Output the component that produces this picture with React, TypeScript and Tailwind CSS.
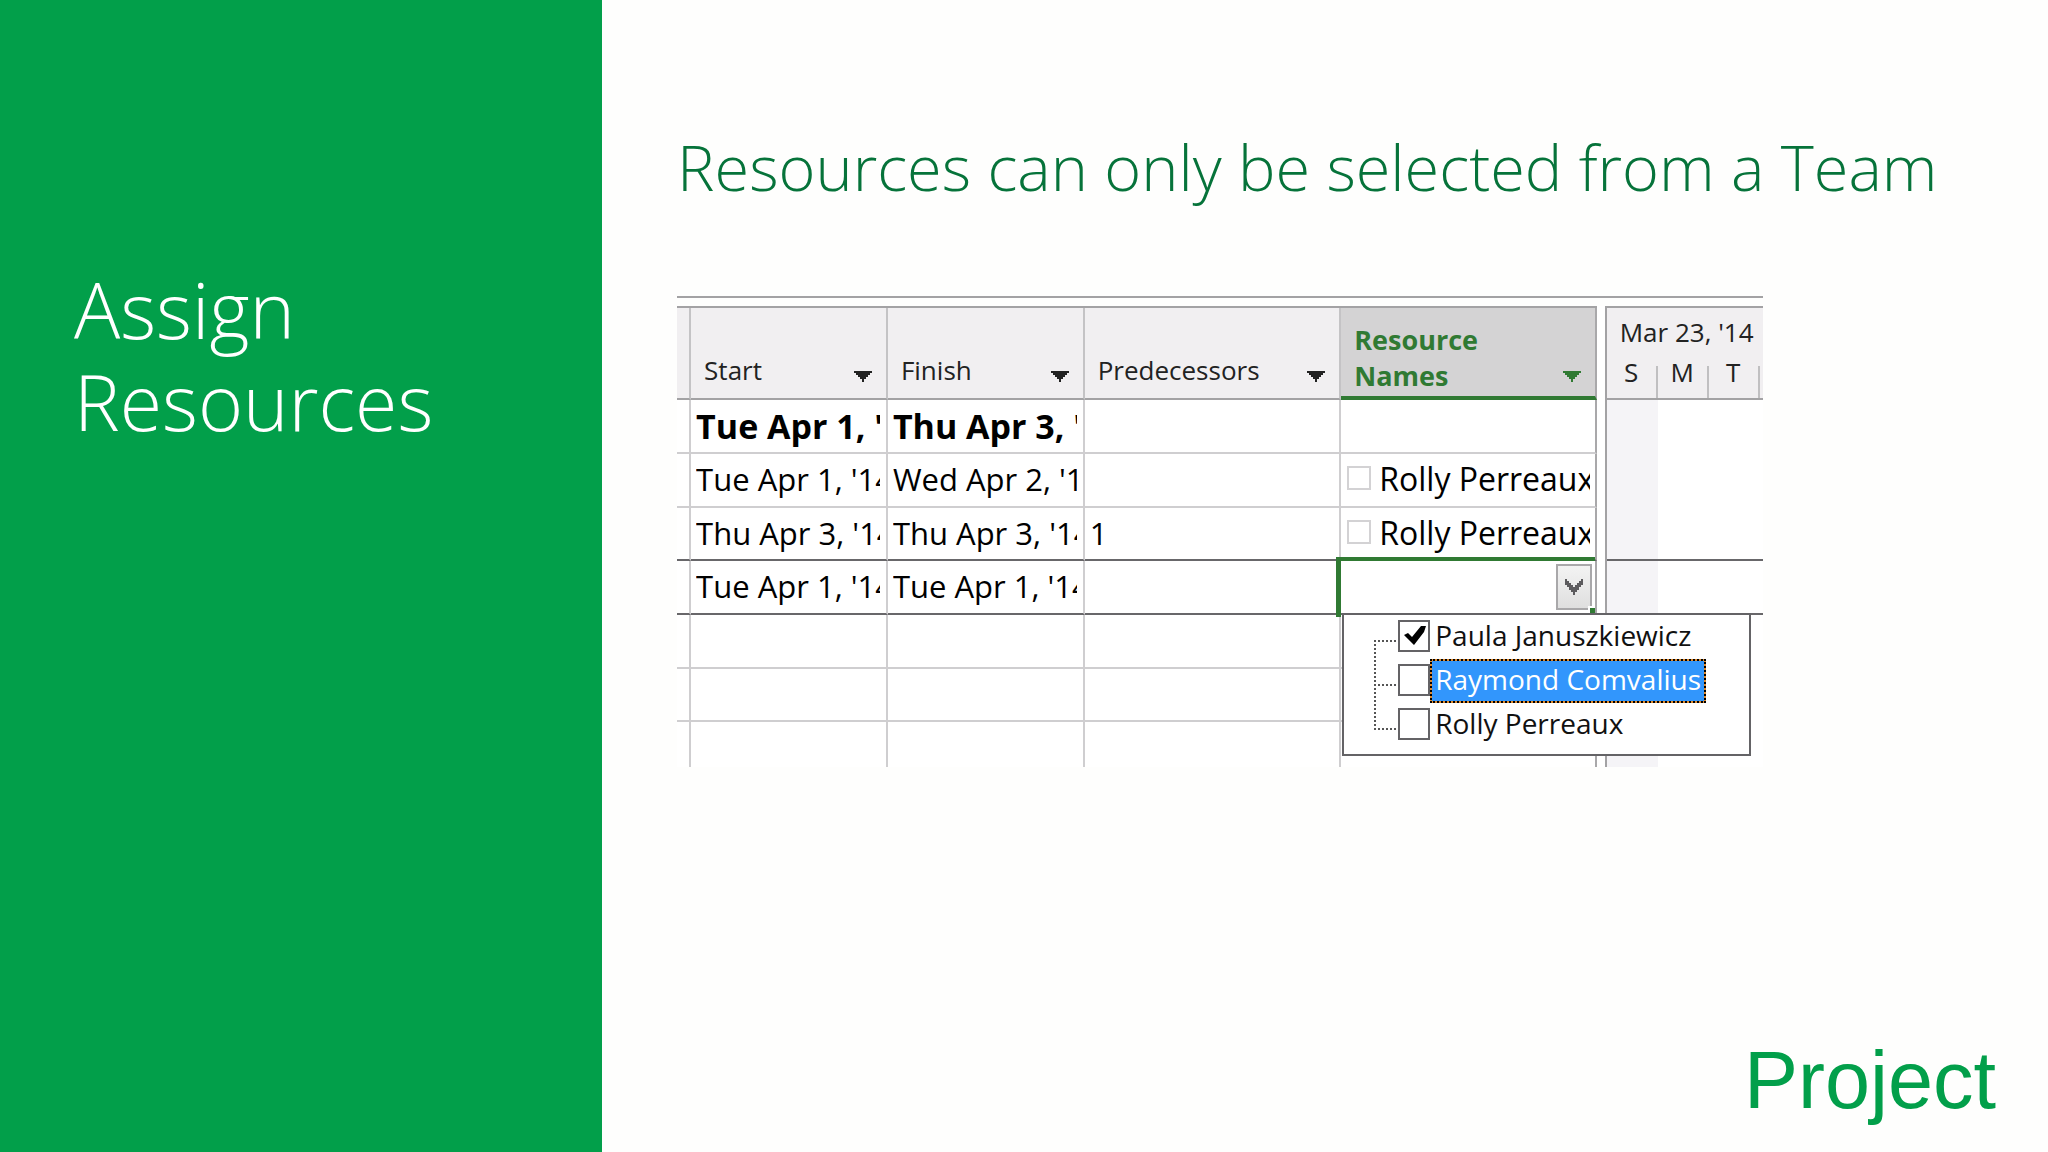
import React from "react";

type Row = { start?: string; finish?: string; pred?: string; name?: string; bold?: boolean; active?: boolean; height: string };

const rows: Row[] = [
  { start: "Tue Apr 1, '14", finish: "Thu Apr 3, '14", bold: true, height: "h-[54px]" },
  { start: "Tue Apr 1, '14", finish: "Wed Apr 2, '14", name: "Rolly Perreaux", height: "h-[54px]" },
  { start: "Thu Apr 3, '14", finish: "Thu Apr 3, '14", pred: "1", name: "Rolly Perreaux", height: "h-[53px]" },
  { start: "Tue Apr 1, '14", finish: "Tue Apr 1, '14", active: true, height: "h-[54px]" },
  { height: "h-[54px]" },
  { height: "h-[53px]" },
  { height: "h-[45px]" },
];

const resources = [
  { name: "Paula Januszkiewicz", checked: true, selected: false },
  { name: "Raymond Comvalius", checked: false, selected: true },
  { name: "Rolly Perreaux", checked: false, selected: false },
];

function FilterArrow({ label, className }: { label: string; className: string }) {
  return (
    <button type="button" aria-label={`Filter ${label}`} className={className}>
      <svg width="18" height="11" viewBox="0 0 18 11" fill="currentColor" aria-hidden="true">
        <path d="M0 0H18V2H16V4H14V6H12V8H10V11H8V8H6V6H4V4H2V2H0Z" />
      </svg>
    </button>
  );
}

function HeaderCell({ label }: { label: string }) {
  return (
    <th scope="col" className="border-r-2 border-b-2 border-r-[#c4c3c5] border-b-[#a3a2a4] bg-[#f1eff1] p-0 align-bottom font-normal">
      <div className="flex items-end justify-between pr-3.5 pb-3 pl-[13px] text-[#222]">
        <span className="text-[26px] leading-8">{label}</span>
        <FilterArrow label={label} className="pb-1" />
      </div>
    </th>
  );
}

function lineClass(row: Row) {
  const i = rows.indexOf(row);
  if (i === rows.length - 1) return "";
  return i === 2 || i === 3 ? "border-b-2 border-b-[#68676a]" : "border-b-2 border-b-[#cfced0]";
}

function Cell({ text, row }: { text?: string; row: Row }) {
  return (
    <td className={`border-r-2 border-r-[#cfced0] p-0 ${lineClass(row)}`}>
      <div className={`mr-1.5 ml-[5px] overflow-hidden whitespace-nowrap ${row.bold ? "text-[34px] leading-[44px] font-bold" : "pb-0.5 text-[31px] leading-10"}`}>
        {text}
      </div>
    </td>
  );
}

function ResourceMenu() {
  return (
    <div className="absolute top-full left-px z-20 w-[409px] border-2 border-[#646366] bg-white pb-[7px]">
      <svg className="absolute top-[25px] left-[30px]" width="24" height="92" viewBox="0 0 24 92" fill="none" stroke="#555" strokeWidth="2" strokeDasharray="2 2" aria-hidden="true">
        <path d="M1 0V90M0 1H22M0 45H22M0 89H22" />
      </svg>
      <ul className="pl-[54px]">
        {resources.map((r) => (
          <li key={r.name}>
            <label className="flex h-11 items-center">
              <span className="relative mb-0.5 flex size-8 shrink-0">
                <input type="checkbox" defaultChecked={r.checked} className="peer size-8 appearance-none border-2 border-[#646366] bg-white" />
                <svg className="pointer-events-none absolute top-1.5 left-1.5 hidden peer-checked:block" width="22" height="20" viewBox="0 0 22 20" fill="#000" aria-hidden="true">
                  <path d="M0 9L4 7L8 11L17 0L22 0L20 6L10 19Z" />
                </svg>
              </span>
              {r.selected ? (
                <span className="border-2 border-dotted border-black bg-[#e08a2c]">
                  <span className="block bg-[#3296fc] px-[3px] pb-1 text-[28px] leading-9 text-white">{r.name}</span>
                </span>
              ) : (
                <span className="px-[5px] pb-1 text-[28px] leading-9 text-[#111]">{r.name}</span>
              )}
            </label>
          </li>
        ))}
      </ul>
    </div>
  );
}

function ResourceCell({ row }: { row: Row }) {
  const last = `relative border-r-2 border-r-[#a9a8aa] p-0 ${lineClass(row)}`;
  if (row.active) {
    return (
      <td className={last}>
        <span className="pointer-events-none absolute -top-1 right-0 -bottom-1 -left-[5px] border-t-4 border-l-[5px] border-[#307a33]" />
        <div className="flex justify-end pr-[3px]">
          <button type="button" aria-label="Choose resources" className="flex h-[46px] w-9 items-center justify-center border-2 border-[#a9a8aa] bg-linear-to-b from-[#f3f3f3] to-[#dfdfdf]">
            <svg width="18" height="16" viewBox="0 0 18 16" fill="#5c5b5e" aria-hidden="true">
              <path d="M0 0H2V2H4V4H6V6H8V8H10V6H12V4H14V2H16V0H18V6H16V8H14V11H12V13H10V16H8V13H6V11H4V8H2V6H0Z" />
            </svg>
          </button>
        </div>
        <span className="absolute right-0 bottom-0 size-[7px] border-t-2 border-l-2 border-white bg-[#307a33]" />
        <ResourceMenu />
      </td>
    );
  }
  return (
    <td className={last}>
      {row.name && (
        <label className="mr-[5px] ml-1.5 flex items-center gap-2 overflow-hidden pb-0.5 whitespace-nowrap text-[32px] leading-10">
          <input type="checkbox" className="mb-0.5 size-6 shrink-0 appearance-none border-2 border-[#d3d2d4] bg-white" />
          {row.name}
        </label>
      )}
    </td>
  );
}

function Sheet() {
  return (
    <table className="w-full table-fixed border-separate border-spacing-0 border-t-2 border-[#a3a2a4] text-left text-black">
      <colgroup>
        <col className="w-[14px]" />
        <col className="w-[21.4%]" />
        <col className="w-[21.4%]" />
        <col className="w-[27.9%]" />
        <col />
      </colgroup>
      <thead>
        <tr className="h-[92px]">
          <td className="border-r-2 border-b-2 border-r-[#c4c3c5] border-b-[#a3a2a4] bg-[#f1eff1] p-0" />
          <HeaderCell label="Start" />
          <HeaderCell label="Finish" />
          <HeaderCell label="Predecessors" />
          <th scope="col" className="border-r-2 border-b-4 border-r-[#a9a8aa] border-b-[#307a33] bg-[#d4d3d4] p-0 align-bottom">
            <div className="flex items-end justify-between pr-3.5 pb-0.5 pl-[13px] text-[#307a33]">
              <span className="text-[27px] leading-9 font-bold">
                Resource
                <br />
                Names
              </span>
              <FilterArrow label="Resource Names" className="pb-3" />
            </div>
          </th>
        </tr>
      </thead>
      <tbody>
        {rows.map((row, i) => (
          <tr key={i} className={row.height}>
            <td className={`border-r-2 border-r-[#cfced0] p-0 ${lineClass(row)}`} />
            <Cell text={row.start} row={row} />
            <Cell text={row.finish} row={row} />
            <Cell text={row.pred} row={row} />
            <ResourceCell row={row} />
          </tr>
        ))}
      </tbody>
    </table>
  );
}

function Timeline() {
  return (
    <div className="flex min-w-0 flex-1 flex-col overflow-hidden border-t-2 border-l-2 border-[#a3a2a4]">
      <div className="flex h-[92px] flex-col justify-between border-b-2 border-[#a3a2a4] bg-[#f1eff1] text-[26px] text-[#222]">
        <div className="pt-1.5 pl-[13px] leading-9 whitespace-nowrap">Mar 23, '14</div>
        <div className="flex">
          {["S", "M", "T"].map((d) => (
            <span key={d} className="flex w-[51px] shrink-0 items-end">
              <span className="grow pb-3.5 text-center leading-6">{d}</span>
              <span className="h-8 w-0.5 bg-[#c0bfc1]" />
            </span>
          ))}
        </div>
      </div>
      <div className="h-[161px] border-b-2 border-[#68676a]">
        <div className="h-full w-[51px] bg-[#f5f4f7]" />
      </div>
      <div className="h-[54px] border-b-2 border-[#68676a]">
        <div className="h-full w-[51px] bg-[#f5f4f7]" />
      </div>
      <div className="w-[51px] grow bg-[#f5f4f7]" />
    </div>
  );
}

export default function App() {
  return (
    <div className="flex min-h-screen bg-[#fefefd] font-['Open_Sans',sans-serif]">
      <aside className="w-[29.4%] shrink-0 bg-[#029f4a] pt-[264px] pl-[74px]">
        <h1 className="text-[77px] leading-[92px] font-light text-white">
          Assign
          <br />
          Resources
        </h1>
      </aside>
      <main className="flex min-w-0 grow flex-col pl-[75px]">
        <h2 className="pt-[117px] text-[63px] leading-[100px] font-light whitespace-nowrap text-[#06733a]">
          Resources can only be selected from a Team
        </h2>
        <section className="mt-[79px] w-[79.2%] border-t-2 border-[#a3a2a4] pt-2">
          <div className="flex bg-white">
            <div className="mr-2 w-[84.7%] shrink-0">
              <Sheet />
            </div>
            <Timeline />
          </div>
        </section>
        <footer className="mt-auto flex justify-end pr-[52px] pb-6">
          <span className="font-['Liberation_Sans',sans-serif] text-[81px] leading-[96px] text-[#029f4a]">Project</span>
        </footer>
      </main>
    </div>
  );
}
